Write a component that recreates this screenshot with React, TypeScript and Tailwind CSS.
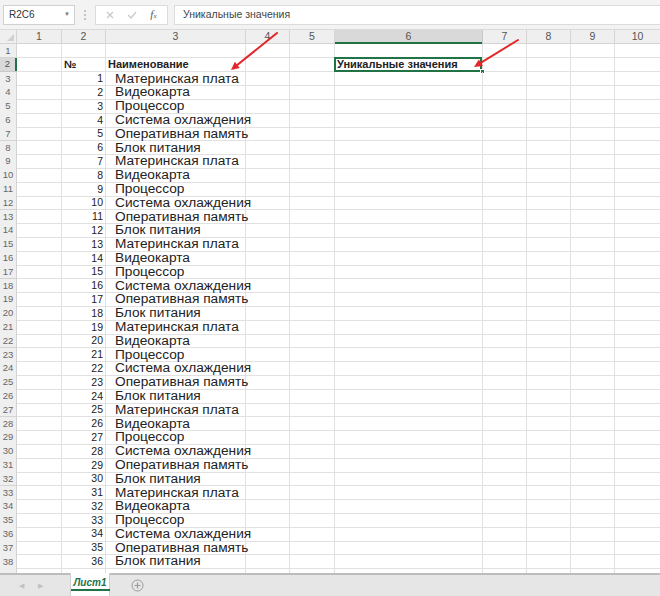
import React from "react";

const names = [
	"Материнская плата",
	"Видеокарта",
	"Процессор",
	"Система охлаждения",
	"Оперативная память",
	"Блок питания",
];

const cols = "grid grid-cols-[17px_45px_44px_140px_44px_45px_148px_44px_44px_44px_46px]";

function Arrow({ x1, y1, x2, y2 }: { x1: number; y1: number; x2: number; y2: number }) {
	const a = Math.atan2(y2 - y1, x2 - x1);
	const l = 9;
	const p1 = [x2 - l * Math.cos(a - 0.45), y2 - l * Math.sin(a - 0.45)];
	const p2 = [x2 - l * Math.cos(a + 0.45), y2 - l * Math.sin(a + 0.45)];
	return (
		<g>
			<line x1={x1} y1={y1} x2={x2 - 4 * Math.cos(a)} y2={y2 - 4 * Math.sin(a)} stroke="#e3262a" strokeWidth="2" strokeLinecap="round" />
			<polygon points={`${x2},${y2} ${p1[0]},${p1[1]} ${p2[0]},${p2[1]}`} fill="#e3262a" />
		</g>
	);
}

export default function App() {
	const rows = Array.from({ length: 39 }, (_, i) => i + 1);

	return (
		<div className="relative w-[660px] h-[596px] overflow-hidden bg-white font-['Liberation_Sans',Arial,sans-serif] text-[#222]">
			{/* formula bar */}
			<div className="flex h-[30px] items-center bg-[#f3f3f3] border-b border-[#dadada]">
				<div className="ml-[3px] flex h-[20px] w-[72px] items-center justify-between border border-[#d0d0d0] bg-white pl-[5px] pr-[4px] text-[10px] text-[#333]">
					<span>R2C6</span>
					<span className="text-[6px] text-[#777]">▼</span>
				</div>
				<div className="ml-[8px] flex w-[4px] flex-col items-center gap-[2px]">
					<span className="size-[2px] bg-[#c4c4c4]" />
					<span className="size-[2px] bg-[#c4c4c4]" />
					<span className="size-[2px] bg-[#c4c4c4]" />
				</div>
				<div className="ml-[8px] flex h-[20px] w-[73px] items-center justify-around border border-[#dcdcdc] bg-white px-[4px]">
					<svg width="8" height="8" viewBox="0 0 8 8">
						<path d="M1 1L7 7M7 1L1 7" stroke="#c8c8c8" strokeWidth="1.2" />
					</svg>
					<svg width="10" height="8" viewBox="0 0 10 8">
						<path d="M1 4L4 7L9 1" stroke="#c8c8c8" strokeWidth="1.2" fill="none" />
					</svg>
					<span className="font-['Liberation_Serif',serif] text-[11px] italic text-[#555]">
						f<span className="text-[7px]">x</span>
					</span>
				</div>
				<div className="ml-[6px] flex h-[20px] flex-1 items-center border border-r-0 border-[#dcdcdc] bg-white pl-[8px] text-[10.5px] text-[#444]">
					Уникальные значения
				</div>
			</div>

			{/* sheet */}
			<div className="h-[543px] overflow-hidden">
				<div className={`${cols} h-[14px] bg-[#efefef] text-[10.5px] text-[#555]`}>
					<div className="relative border-r border-b border-[#d4d4d4]">
						<svg className="absolute bottom-[2px] right-[2px]" width="7" height="7" viewBox="0 0 7 7">
							<path d="M7 0V7H0Z" fill="#cfcfcf" />
						</svg>
					</div>
					{[1, 2, 3, 4, 5, 6, 7, 8, 9, 10].map((c) =>
						c === 6 ? (
							<div key={c} className="flex flex-col border-r border-[#c8c8c8] bg-[#d9d9d9]">
								<div className="flex flex-1 items-center justify-center leading-none">{c}</div>
								<div className="h-[2px] bg-[#217346]" />
							</div>
						) : (
							<div key={c} className="flex items-center justify-center border-r border-b border-[#d4d4d4] leading-none">
								{c}
							</div>
						),
					)}
				</div>
				<div className="flex h-[538px] flex-col">
					{rows.map((r) => {
						const n = r - 2;
						return (
							<div key={r} className={`${cols} h-[13.8px] shrink-0`}>
								{r === 2 ? (
									<div className="flex border-b border-[#c8c8c8] bg-[#d9d9d9]">
										<div className="flex flex-1 items-center justify-center text-[9.5px] leading-none text-[#555]">{r}</div>
										<div className="w-[2px] bg-[#217346]" />
									</div>
								) : (
									<div className="flex items-center justify-center border-r border-b border-[#d4d4d4] bg-[#efefef] text-[9.5px] leading-none text-[#666]">
										{r < 39 ? r : ""}
									</div>
								)}
								<div className="border-r border-b border-[#e1e1e1]" />
								<div className="flex items-center justify-end overflow-hidden border-r border-b border-[#e1e1e1] pr-[2px] text-[10.5px] leading-none whitespace-nowrap">
									{r === 2 ? <span className="mr-auto pl-[2px] text-[11px] font-bold">№</span> : n >= 1 && n <= 36 ? n : ""}
								</div>
								<div className="flex items-center overflow-visible border-r border-b border-[#e1e1e1] text-[13.7px] leading-none whitespace-nowrap">
									{r === 2 ? (
										<span className="pl-[2px] text-[11px] font-bold">Наименование</span>
									) : n >= 1 && n <= 36 ? (
										<span className="pl-[9px]">{names[(n - 1) % 6]}</span>
									) : null}
								</div>
								<div className="border-r border-b border-[#e1e1e1]" />
								<div className="border-r border-b border-[#e1e1e1]" />
								<div className="relative flex items-center border-r border-b border-[#e1e1e1] text-[11px] leading-none whitespace-nowrap">
									{r === 2 && (
										<>
											<span className="pl-[2px] font-bold">Уникальные значения</span>
											<span className="absolute -left-px -top-px h-[calc(100%+2px)] w-[calc(100%+1px)] border-2 border-[#217346]" />
											<span className="absolute -bottom-[3px] -right-[3px] size-[5px] border border-white bg-[#217346]" />
										</>
									)}
								</div>
								<div className="border-r border-b border-[#e1e1e1]" />
								<div className="border-r border-b border-[#e1e1e1]" />
								<div className="border-r border-b border-[#e1e1e1]" />
								<div className="border-r border-b border-[#e1e1e1]" />
							</div>
						);
					})}
				</div>
			</div>

			{/* sheet tabs */}
			<div className="flex h-[23px] items-stretch border-t-2 border-[#bdbdbd] bg-[#e6e6e6]">
				<div className="flex w-[70px] items-center gap-[14px] pl-[19px] text-[7px] leading-none text-[#c2c2c2]">
					<span>◀</span>
					<span>▶</span>
				</div>
				<div className="-mt-[2px] flex w-[40px] flex-col items-center justify-center border-x border-[#cfcfcf] bg-white">
					<span className="border-b-2 border-[#217346] px-[3px] pb-px text-[10px] font-bold italic leading-none text-[#217346]">
						Лист1
					</span>
				</div>
				<div className="ml-[21px] flex items-center">
					<svg width="13" height="13" viewBox="0 0 13 13">
						<circle cx="6.5" cy="6.5" r="5.5" fill="none" stroke="#9a9a9a" strokeWidth="1" />
						<path d="M6.5 3.5V9.5M3.5 6.5H9.5" stroke="#9a9a9a" strokeWidth="1.2" />
					</svg>
				</div>
			</div>
			<div className="h-[4px] border-t border-[#d0d0d0] bg-[#f0f0f0]" />

			{/* annotation arrows */}
			<svg className="pointer-events-none absolute left-0 top-0" width="660" height="596">
				<Arrow x1={277} y1={33} x2={231} y2={70} />
				<Arrow x1={518} y1={40} x2={474} y2={67} />
			</svg>
		</div>
	);
}
